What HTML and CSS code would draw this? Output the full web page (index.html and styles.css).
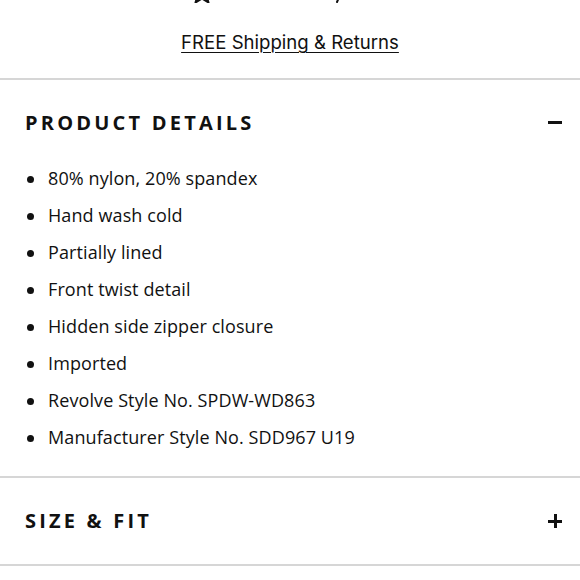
FILE: index.html
```html
<!DOCTYPE html>
<html lang="en">
<head>
<meta charset="utf-8">
<link rel="stylesheet" href="styles.css">
</head>
<body>
<div class="page">
  <div class="rating">
    <svg class="rating-art" width="160" height="20" viewBox="0 0 160 20" aria-hidden="true">
      <path d="M12 1 L15 8 L22 8.5 L16.5 13 L18.5 19.5 L12 15.5 L5.5 19.5 L7.5 13 L2 8.5 L9 8 Z" fill="none" stroke="#111" stroke-width="2" stroke-linejoin="round"/>
      <path d="M150 12 L147 19" stroke="#111" stroke-width="2" stroke-linecap="round"/>
    </svg>
  </div>
  <p class="shipping"><a href="#">FREE Shipping &amp; Returns</a></p>
  <section class="acc">
    <div class="acc-head">
      <h2>PRODUCT DETAILS</h2>
      <span class="icon minus"></span>
    </div>
    <ul class="details">
      <li>80% nylon, 20% spandex</li>
      <li>Hand wash cold</li>
      <li>Partially lined</li>
      <li>Front twist detail</li>
      <li>Hidden side zipper closure</li>
      <li>Imported</li>
      <li>Revolve Style No. SPDW-WD863</li>
      <li>Manufacturer Style No. SDD967 U19</li>
    </ul>
  </section>
  <section class="acc">
    <div class="acc-head">
      <h2>SIZE &amp; FIT</h2>
      <span class="icon plus"></span>
    </div>
  </section>
</div>
</body>
</html>
```

FILE: styles.css
```css
* { box-sizing: border-box; }
html, body { margin: 0; padding: 0; background: #fff; }
body { font-family: "Open Sans", "Liberation Sans", sans-serif; color: #111; }
.page { width: 580px; }
.rating {
  height: 20px;
  margin-top: -17px;
  display: flex;
  justify-content: center;
  overflow: hidden;
}
.rating-art { display: block; margin-left: -40px; }
.shipping {
  margin: 0;
  padding: 28px 0 25px;
  text-align: center;
  font-family: "Inter", sans-serif;
  font-size: 18.6px;
  line-height: 22px;
}
.shipping a { color: #111; text-decoration: underline; text-underline-offset: 3px; text-decoration-thickness: 1px; }
.acc { border-top: 2px solid #d6d6d6; }
.acc:last-child { border-bottom: 2px solid #d6d6d6; }
.acc-head {
  display: flex;
  align-items: center;
  justify-content: space-between;
  padding: 30px 18px 24px 25px;
}
.acc:last-child .acc-head { padding-bottom: 30px; }
.acc-head h2 {
  margin: 0;
  font-size: 20px;
  line-height: 26px;
  font-weight: 700;
  letter-spacing: 3.2px;
}
.icon { position: relative; width: 14px; height: 14px; display: block; }
.icon::before, .icon::after {
  content: "";
  position: absolute;
  background: #111;
}
.minus::before { left: 0; top: 5px; width: 14px; height: 3px; }
.plus::before { left: 0; top: 6px; width: 14px; height: 2.5px; }
.plus::after { left: 6px; top: 0; width: 2.5px; height: 14px; }
.details {
  list-style: none;
  margin: 0;
  padding: 0 0 20px 48px;
}
.details li {
  position: relative;
  font-size: 18px;
  line-height: 37px;
  letter-spacing: 0.1px;
}
.details li::before {
  content: "";
  position: absolute;
  left: -21px;
  top: 16px;
  width: 7px;
  height: 7px;
  border-radius: 50%;
  background: #111;
}
```
